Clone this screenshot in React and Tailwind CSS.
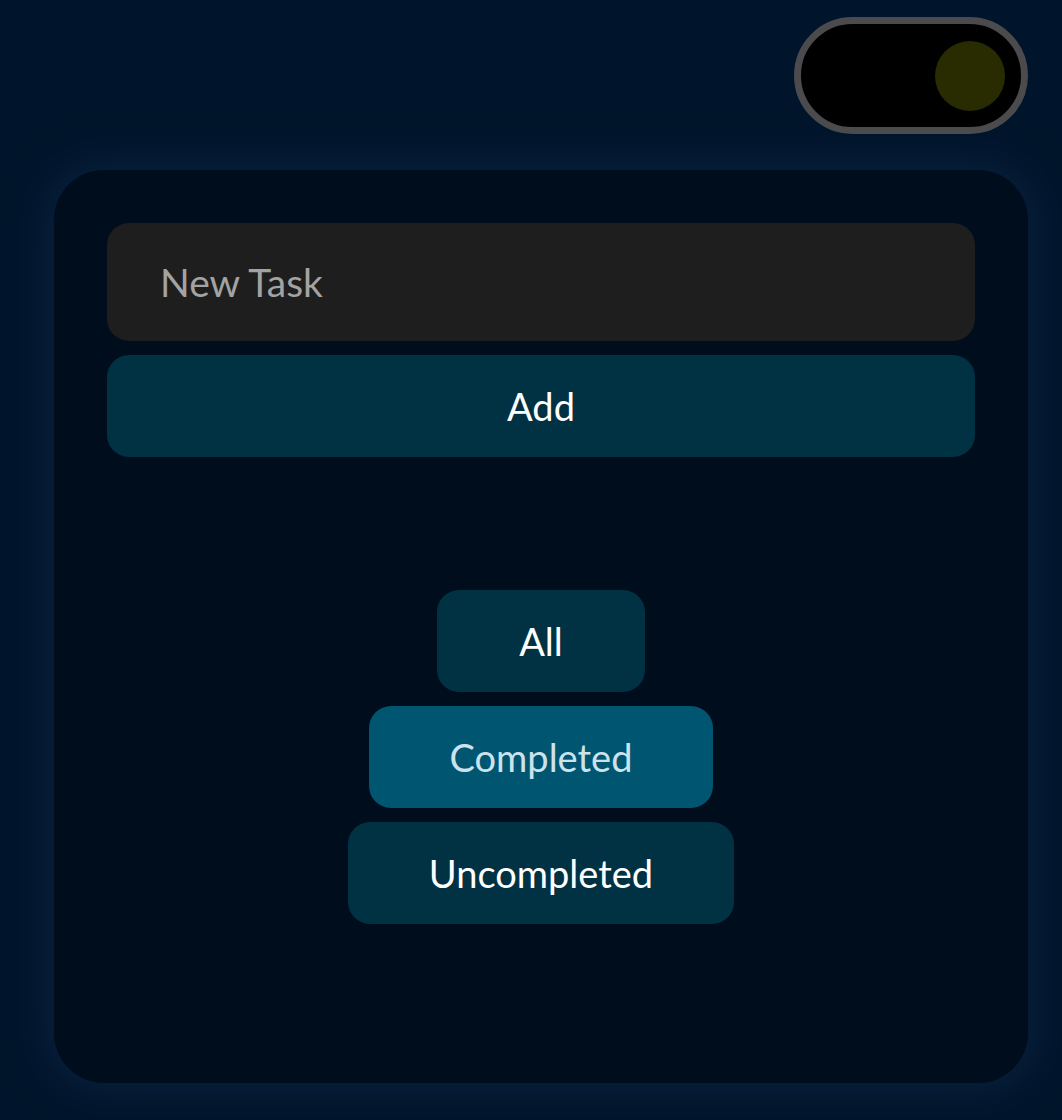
import { useState } from 'react';

const filters = [
    { label: 'All', w: 'w-[208px]' },
    { label: 'Completed', w: 'w-[344px]' },
    { label: 'Uncompleted', w: 'w-[386px]' },
];

export default function App() {
    const [task, setTask] = useState('');
    const [active, setActive] = useState('Completed');
    const [dark, setDark] = useState(true);

    return (
        <div className="min-h-[1120px] bg-[#00152b] font-['Lato','Noto_Sans',sans-serif] pt-[17px] px-[34px] pb-[37px]">
            <div className="flex justify-end">
                <button
                    onClick={() => setDark(!dark)}
                    className="w-[234px] h-[117px] rounded-full border-[7px] border-[#4b4b4d] bg-black flex items-center justify-end pr-[16px]"
                >
                    <span className="w-[70px] h-[70px] rounded-full bg-[#282c00]" />
                </button>
            </div>

            <div className="mt-[36px] ml-[20px] h-[913px] rounded-[50px] bg-[#000d1c] shadow-[0_0_40px_10px_rgba(16,40,72,0.55)] p-[53px] flex flex-col">
                <input
                    value={task}
                    onChange={e => setTask(e.target.value)}
                    placeholder="New Task"
                    className="h-[118px] w-full rounded-[22px] bg-[#1e1e1e] px-[53px] text-[39px] text-white placeholder:text-[#a3a3a3] outline-none"
                />
                <button className="mt-[14px] h-[102px] w-full rounded-[22px] bg-[#003244] text-[38px] text-white">
                    Add
                </button>

                <div className="mt-[133px] flex flex-col items-center gap-[14px]">
                    {filters.map(f => (
                        <button
                            key={f.label}
                            onClick={() => setActive(f.label)}
                            className={`${f.w} h-[102px] rounded-[22px] text-[38px] ${active === f.label ? 'bg-[#005571] text-[#cde3ec]' : 'bg-[#003244] text-white'}`}
                        >
                            {f.label}
                        </button>
                    ))}
                </div>
            </div>
        </div>
    );
}
